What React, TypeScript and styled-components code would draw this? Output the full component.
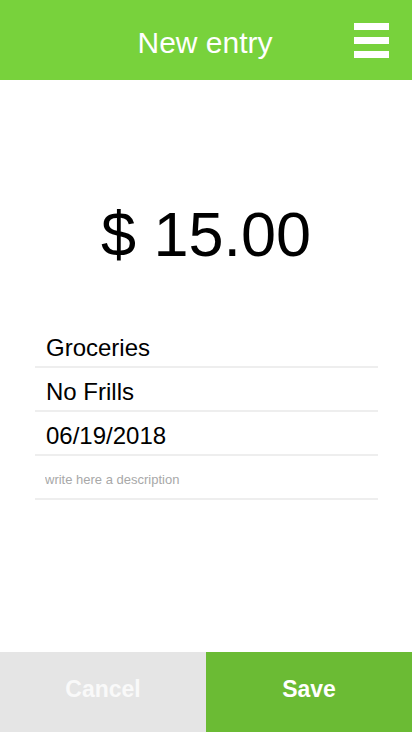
import React from 'react';
import styled, { createGlobalStyle } from 'styled-components';

const GlobalStyle = createGlobalStyle`
    html, body {
        margin: 0;
        padding: 0;
        background: #fff;
        font-family: 'Liberation Sans', Arial, sans-serif;
    }
    * {
        box-sizing: border-box;
    }
`;

export default function App() {
    return (
        <Page>
            <GlobalStyle />
            <Header>
                <Title>New entry</Title>
                <MenuButton aria-label="menu">
                    <Bar />
                    <Bar />
                    <Bar />
                </MenuButton>
            </Header>

            <Main>
                <Amount>$ 15.00</Amount>
                <Fields>
                    <Field defaultValue="Groceries" />
                    <Field defaultValue="No Frills" />
                    <Field defaultValue="06/19/2018" />
                    <Field className="description" placeholder="write here a description" />
                </Fields>
            </Main>

            <Footer>
                <ActionButton className="cancel">Cancel</ActionButton>
                <ActionButton className="save">Save</ActionButton>
            </Footer>
        </Page>
    );
}

const Page = styled.div`
    display: flex;
    flex-direction: column;
    width: 412px;
    height: 732px;
    overflow: hidden;
`;
const Header = styled.header`
    position: relative;
    display: flex;
    align-items: center;
    justify-content: center;
    height: 80px;
    flex-shrink: 0;
    background: #78d23c;
`;
const Title = styled.h1`
    margin: 0;
    padding: 6px 2px 0 0;
    color: #fff;
    font-size: 30px;
    font-weight: normal;
`;
// sits over the header, to the right of the centred title
const MenuButton = styled.button`
    position: absolute;
    right: 23px;
    top: 23px;
    display: flex;
    flex-direction: column;
    gap: 7px;
    padding: 0;
    border: none;
    background: none;
    cursor: pointer;
`;
const Bar = styled.span`
    display: block;
    width: 35px;
    height: 7px;
    background: #fff;
`;
const Main = styled.main`
    flex: 1;
    display: flex;
    flex-direction: column;
    align-items: center;
    padding-top: 123px;
`;
const Amount = styled.div`
    font-size: 63px;
    line-height: 1;
    color: #000;
    margin-bottom: 58px;
`;
const Fields = styled.div`
    display: flex;
    flex-direction: column;
    width: 343px;
    margin-left: 1px;
`;
const Field = styled.input`
    height: 44px;
    padding: 6px 11px 0;
    border: none;
    border-bottom: 2px solid #eeeeee;
    outline: none;
    background: transparent;
    font-family: 'Liberation Sans', Arial, sans-serif;
    font-size: 24px;
    color: #000;
    &.description {
        font-size: 13px;
        padding: 4px 10px 0;
    }
    &::placeholder {
        color: #a8a8a8;
    }
`;
const Footer = styled.footer`
    display: flex;
    height: 80px;
    flex-shrink: 0;
`;
const ActionButton = styled.button`
    flex: 1;
    border: none;
    font-family: 'Liberation Sans', Arial, sans-serif;
    font-size: 23px;
    font-weight: bold;
    padding: 0 0 5px;
    cursor: pointer;
    &.cancel {
        background: #e5e5e5;
        color: #f9f9f9;
    }
    &.save {
        background: #6bbb34;
        color: #fff;
    }
`;
